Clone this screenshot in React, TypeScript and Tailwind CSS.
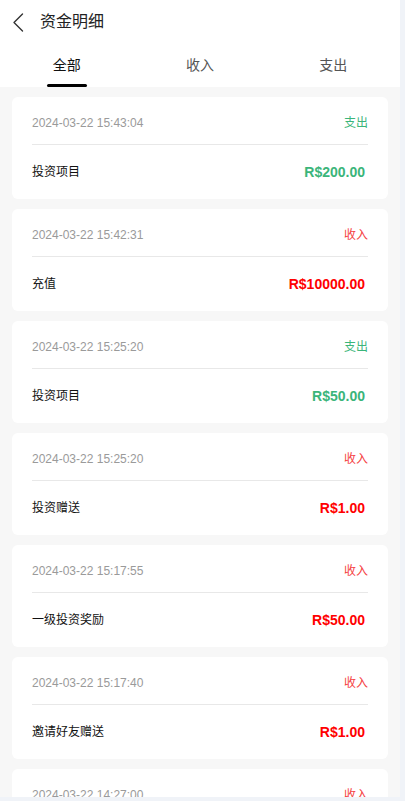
import React from "react";

type Row = {
  time: string;
  type: "收入" | "支出";
  title: string;
  amount: string;
};

const rows: Row[] = [
  { time: "2024-03-22 15:43:04", type: "支出", title: "投资项目", amount: "R$200.00" },
  { time: "2024-03-22 15:42:31", type: "收入", title: "充值", amount: "R$10000.00" },
  { time: "2024-03-22 15:25:20", type: "支出", title: "投资项目", amount: "R$50.00" },
  { time: "2024-03-22 15:25:20", type: "收入", title: "投资赠送", amount: "R$1.00" },
  { time: "2024-03-22 15:17:55", type: "收入", title: "一级投资奖励", amount: "R$50.00" },
  { time: "2024-03-22 15:17:40", type: "收入", title: "邀请好友赠送", amount: "R$1.00" },
  { time: "2024-03-22 14:27:00", type: "收入", title: "充值", amount: "R$100.00" },
];

const tabs = ["全部", "收入", "支出"];

const App = () => {
  return (
    <div className="w-[405px] h-[801px] bg-[#f0f3f8] overflow-hidden font-['Liberation_Sans','Noto_Sans_CJK_SC',sans-serif]">
      <div className="w-[400px] h-[797px] overflow-hidden bg-[#f7f7f7] flex flex-col">
        {/* header */}
        <div className="bg-white">
          <div className="h-[44px] flex items-center">
            <div className="w-[40px] flex items-center pl-[12px]">
              <svg width="12" height="19" viewBox="0 0 12 19" fill="none">
                <path d="M10.5 1 L2 9.5 L10.5 18" stroke="#333" strokeWidth="1.4" strokeLinecap="round" strokeLinejoin="round" />
              </svg>
            </div>
            <span className="text-[16px] text-[#222]">资金明细</span>
          </div>
          <div className="grid grid-cols-3 h-[43px]">
            {tabs.map((t, i) => (
              <div key={t} className="flex flex-col items-center">
                <span className={`text-[14px] leading-[20px] mt-[11px] ${i === 0 ? "text-[#111]" : "text-[#555]"}`}>{t}</span>
                {i === 0 && <div className="mt-[9px] w-[40px] h-[3px] rounded-full bg-black" />}
              </div>
            ))}
          </div>
        </div>

        {/* list */}
        <div className="flex flex-col gap-[10px] px-[12px] pt-[10px]">
          {rows.map((r, i) => {
            const out = r.type === "支出";
            return (
              <div key={i} className="bg-white rounded-[6px] px-[20px] shrink-0">
                <div className="flex justify-between items-center pt-[16px] pb-[11px] border-b border-[#e8e8e8]">
                  <span className="text-[12px] leading-[20px] text-[#9a9a9a]">{r.time}</span>
                  <span className={`text-[12px] leading-[20px] ${out ? "text-[#3bb57a]" : "text-[#f53f3f]"}`}>{r.type}</span>
                </div>
                <div className="h-[54px] flex justify-between items-center">
                  <span className="text-[12px] text-[#111]">{r.title}</span>
                  <span className={`text-[14px] font-bold pr-[3px] ${out ? "text-[#3bb57a]" : "text-[#ff0000]"}`}>{r.amount}</span>
                </div>
              </div>
            );
          })}
        </div>
      </div>
    </div>
  );
};

export default App;
